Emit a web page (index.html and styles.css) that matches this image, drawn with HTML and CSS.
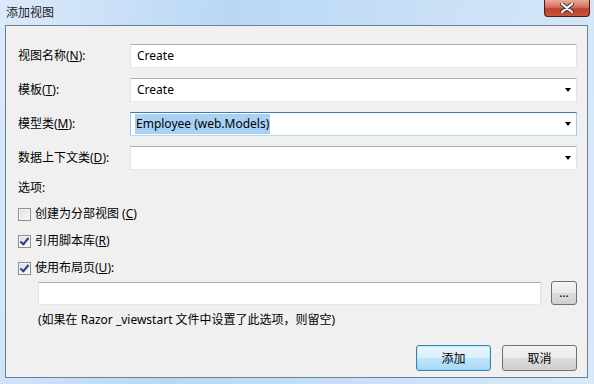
FILE: index.html
```html
<!DOCTYPE html>
<html lang="zh-CN">
<head>
  <meta charset="UTF-8" />
  <title>添加视图</title>
  <link rel="stylesheet" href="styles.css">
</head>
<body>
  <div class="window">
    <div class="titlebar">
      <span class="title">添加视图</span>
      <div class="close">
        <svg width="14" height="10" viewBox="0 0 14 10">
          <path d="M2 1 L12 9 M12 1 L2 9" stroke="#3a3a3a" stroke-width="4" stroke-linecap="round" />
          <path d="M2 1 L12 9 M12 1 L2 9" stroke="#ffffff" stroke-width="2.2" stroke-linecap="round" />
        </svg>
      </div>
    </div>

    <div class="client">
      <div class="fields">
        <label class="field-label">视图名称(<u>N</u>):</label>
        <div class="textbox">Create</div>

        <label class="field-label">模板(<u>T</u>):</label>
        <div class="textbox combo">Create<span class="arrow"></span></div>

        <label class="field-label">模型类(<u>M</u>):</label>
        <div class="textbox combo focused"><span class="selected">Employee (web.Models)</span><span class="arrow"></span></div>

        <label class="field-label">数据上下文类(<u>D</u>):</label>
        <div class="textbox combo"><span class="arrow"></span></div>
      </div>

      <div class="section">选项:</div>

      <div class="checks">
        <div class="check"><span class="box"></span><span>创建为分部视图 (<u>C</u>)</span></div>
        <div class="check"><span class="box checked"></span><span>引用脚本库(<u>R</u>)</span></div>
        <div class="check"><span class="box checked"></span><span>使用布局页(<u>U</u>):</span></div>
      </div>

      <div class="layout-row">
        <div class="textbox wide"></div>
        <button class="browse">...</button>
      </div>

      <div class="note">(如果在 Razor _viewstart 文件中设置了此选项，则留空)</div>

      <div class="actions">
        <button class="btn default">添加</button>
        <button class="btn">取消</button>
      </div>
    </div>
  </div>
</body>
</html>
```

FILE: styles.css
```css
body {
  margin: 0;
  font-family: "Noto Sans", "Noto Sans CJK SC", sans-serif;
  font-size: 12px;
  color: #000;
}

.window {
  width: 594px;
  height: 384px;
  box-sizing: border-box;
  background: linear-gradient(100deg, #dbeafa 0%, #b9d7f5 35%, #c9e0f7 65%, #d8e9fa 100%);
  display: flex;
  flex-direction: column;
}

.titlebar {
  height: 25px;
  display: flex;
  justify-content: space-between;
  align-items: flex-start;
  padding-left: 6px;
  padding-right: 4px;
}

.title {
  line-height: 16px;
  margin-top: 5px;
  color: #1b1b1b;
}

.close {
  width: 44px;
  height: 16px;
  border: 1px solid #4f1b14;
  border-top: none;
  border-radius: 0 0 4px 4px;
  background: linear-gradient(#e9a99b 0%, #d4705e 45%, #c0412e 55%, #c9553d 100%);
  display: flex;
  justify-content: center;
  align-items: center;
}

.client {
  flex: 1;
  margin: 0 6px 6px 5px;
  border: 1px solid #70808f;
  background: #f0f0f0;
  padding: 18px 10px 0 12px;
  display: flex;
  flex-direction: column;
}

.fields {
  display: grid;
  grid-template-columns: 112px 1fr;
  grid-auto-rows: 24px;
  row-gap: 10px;
  align-items: center;
}

.field-label {
  line-height: 16px;
}

.textbox {
  height: 23px;
  box-sizing: border-box;
  background: #fff;
  border: 1px solid #e2e3ea;
  border-top-color: #abadb3;
  border-bottom-color: #e3e9ef;
  padding: 0 6px;
  line-height: 21px;
  position: relative;
}

.fields .textbox {
  height: 24px;
  line-height: 22px;
}

.textbox.focused {
  border-color: #a4c9e3;
  border-top-color: #3d7bad;
  border-bottom-color: #b7d9ed;
  padding-left: 4px;
}

.selected {
  background: #a9d1f6;
  padding: 1px 1px 2px;
}

.arrow {
  position: absolute;
  right: 5px;
  top: 9px;
  width: 0;
  height: 0;
  border-left: 3.5px solid transparent;
  border-right: 3.5px solid transparent;
  border-top: 4px solid #000;
}

.section {
  margin-top: 10px;
  line-height: 16px;
}

.checks {
  display: flex;
  flex-direction: column;
  gap: 11px;
  margin-top: 10px;
}

.check {
  display: flex;
  align-items: center;
  gap: 4px;
  line-height: 16px;
}

.box {
  width: 13px;
  height: 13px;
  box-sizing: border-box;
  border: 1px solid #8f8f8f;
  background: linear-gradient(135deg, #dcdcdc, #fbfbfb);
  box-shadow: inset 0 0 0 1px #f4f4f4;
  position: relative;
}

.box.checked::after {
  content: "";
  position: absolute;
  left: 3px;
  top: 0px;
  width: 3px;
  height: 7px;
  border: solid #2c3a8c;
  border-width: 0 2px 2px 0;
  transform: rotate(40deg);
}

.layout-row {
  display: flex;
  align-items: center;
  gap: 10px;
  margin-top: 5px;
  padding-left: 20px;
}

.textbox.wide {
  flex: 1;
}

.browse {
  width: 26px;
  height: 24px;
  padding: 0;
  border: 1px solid #707070;
  border-radius: 3px;
  background: linear-gradient(#f2f2f2 0%, #ebebeb 50%, #dddddd 51%, #cfcfcf 100%);
  font-family: inherit;
  font-size: 12px;
  line-height: 14px;
  color: #000;
}

.note {
  margin-top: 7px;
  padding-left: 20px;
  line-height: 16px;
}

.actions {
  display: flex;
  justify-content: flex-end;
  gap: 11px;
  margin-top: 17px;
}

.btn {
  width: 75px;
  height: 26px;
  border: 1px solid #707070;
  border-radius: 3px;
  background: linear-gradient(#f2f2f2 0%, #ebebeb 50%, #dddddd 51%, #cfcfcf 100%);
  font-family: inherit;
  font-size: 12px;
  color: #000;
  padding: 0;
}

.btn.default {
  border-color: #3c7fb1;
  background: linear-gradient(#eaf6fd 0%, #d9f0fc 50%, #bee6fd 51%, #a7d9f5 100%);
  box-shadow: inset 0 0 0 1px #48d8fb44;
}
```
